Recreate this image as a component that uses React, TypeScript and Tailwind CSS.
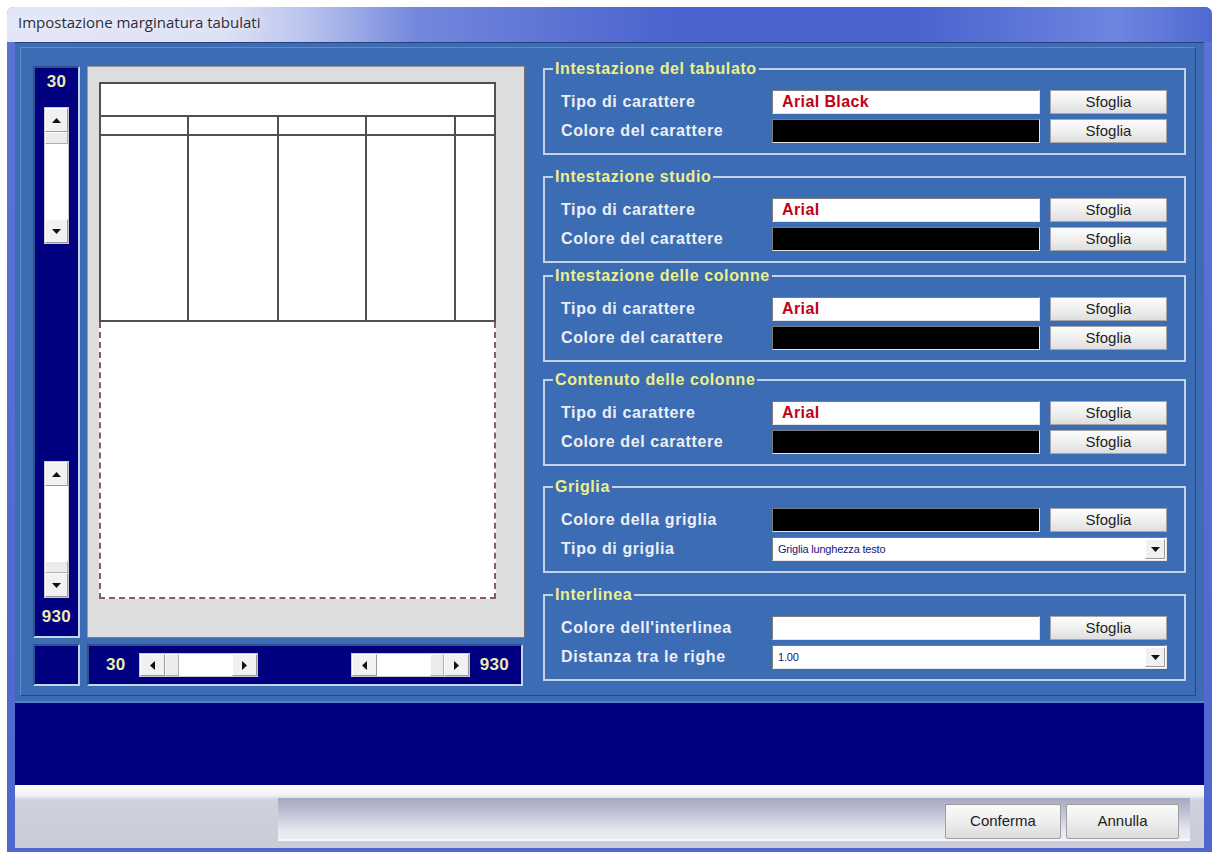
'use client';

import React from 'react';

type Dir = 'up' | 'down' | 'left' | 'right';

const arrowPaths: Record<Dir, string> = {
  up: 'M0 5L4.5 0L9 5Z',
  down: 'M0 0L9 0L4.5 5Z',
  left: 'M5 0L5 9L0 4.5Z',
  right: 'M0 0L5 4.5L0 9Z',
};

function Arrow({ dir }: { dir: Dir }) {
  const vertical = dir === 'up' || dir === 'down';
  return (
    <svg width={vertical ? 9 : 5} height={vertical ? 5 : 9} viewBox={vertical ? '0 0 9 5' : '0 0 5 9'}>
      <path d={arrowPaths[dir]} fill="#111" />
    </svg>
  );
}

// raised grey button used by scrollbars and combos
function ArrowButton({ dir, className = '' }: { dir: Dir; className?: string }) {
  return (
    <div
      className={`flex items-center justify-center bg-[#f1f1f1] border border-t-white border-l-white border-r-[#9a9a9a] border-b-[#9a9a9a] ${className}`}
    >
      <Arrow dir={dir} />
    </div>
  );
}

function VScroll({ thumbAtTop }: { thumbAtTop: boolean }) {
  const thumb = (
    <div className="h-[12px] bg-[#ebebeb] border border-t-white border-l-white border-r-[#b0b0b0] border-b-[#b0b0b0]" />
  );
  return (
    <div className="w-[25px] h-[137px] flex flex-col bg-white border border-[#c9c9c9]">
      <ArrowButton dir="up" className="h-[24px]" />
      {thumbAtTop && thumb}
      <div className="flex-1 bg-white" />
      {!thumbAtTop && thumb}
      <ArrowButton dir="down" className="h-[24px]" />
    </div>
  );
}

function HScroll({ thumbAtLeft }: { thumbAtLeft: boolean }) {
  const thumb = (
    <div className="w-[14px] bg-[#ebebeb] border border-t-white border-l-white border-r-[#b0b0b0] border-b-[#b0b0b0]" />
  );
  return (
    <div className="w-[119px] h-[24px] flex bg-white border border-[#c9c9c9]">
      <ArrowButton dir="left" className="w-[25px]" />
      {thumbAtLeft && thumb}
      <div className="flex-1 bg-white" />
      {!thumbAtLeft && thumb}
      <ArrowButton dir="right" className="w-[25px]" />
    </div>
  );
}

type Row =
  | { label: string; kind: 'font'; value: string }
  | { label: string; kind: 'color'; swatch: 'black' | 'white' }
  | { label: string; kind: 'combo'; value: string };

interface Group {
  title: string;
  spacing: string;
  rows: Row[];
}

const groups: Group[] = [
  {
    title: 'Intestazione del tabulato',
    spacing: 'mt-0',
    rows: [
      { label: 'Tipo di carattere', kind: 'font', value: 'Arial Black' },
      { label: 'Colore del carattere', kind: 'color', swatch: 'black' },
    ],
  },
  {
    title: 'Intestazione studio',
    spacing: 'mt-[13px]',
    rows: [
      { label: 'Tipo di carattere', kind: 'font', value: 'Arial' },
      { label: 'Colore del carattere', kind: 'color', swatch: 'black' },
    ],
  },
  {
    title: 'Intestazione delle colonne',
    spacing: 'mt-[4px]',
    rows: [
      { label: 'Tipo di carattere', kind: 'font', value: 'Arial' },
      { label: 'Colore del carattere', kind: 'color', swatch: 'black' },
    ],
  },
  {
    title: 'Contenuto delle colonne',
    spacing: 'mt-[9px]',
    rows: [
      { label: 'Tipo di carattere', kind: 'font', value: 'Arial' },
      { label: 'Colore del carattere', kind: 'color', swatch: 'black' },
    ],
  },
  {
    title: 'Griglia',
    spacing: 'mt-[12px]',
    rows: [
      { label: 'Colore della griglia', kind: 'color', swatch: 'black' },
      { label: 'Tipo di griglia', kind: 'combo', value: 'Griglia lunghezza testo' },
    ],
  },
  {
    title: 'Interlinea',
    spacing: 'mt-[13px]',
    rows: [
      { label: "Colore dell'interlinea", kind: 'color', swatch: 'white' },
      { label: 'Distanza tra le righe', kind: 'combo', value: '1.00' },
    ],
  },
];

const sunken = 'border border-t-[#7c7c7c] border-l-[#7c7c7c] border-r-[#e4e4e4] border-b-[#e4e4e4]';

function BrowseButton() {
  return (
    <div className="w-[117px] h-[24px] flex items-center justify-center bg-[linear-gradient(180deg,#fcfcfc_0%,#f0f0f0_50%,#dedede_100%)] border border-[#a6a6a6] text-[15px] text-[#1e1e1e]">
      Sfoglia
    </div>
  );
}

function FieldRow({ row }: { row: Row }) {
  return (
    <div className="flex items-center h-[24px]">
      <div className="w-[211px] text-[16px] font-bold text-[#eceff6] tracking-[0.6px]">{row.label}</div>
      {row.kind === 'font' && (
        <>
          <div className={`w-[268px] h-[24px] bg-white ${sunken} pl-[9px] flex items-center text-[16px] font-bold text-[#c00018] tracking-[0.4px]`}>
            {row.value}
          </div>
          <div className="ml-[10px]">
            <BrowseButton />
          </div>
        </>
      )}
      {row.kind === 'color' && (
        <>
          <div className={`w-[268px] h-[24px] ${sunken} ${row.swatch === 'black' ? 'bg-black' : 'bg-white'}`} />
          <div className="ml-[10px]">
            <BrowseButton />
          </div>
        </>
      )}
      {row.kind === 'combo' && (
        <div className={`w-[395px] h-[24px] bg-white ${sunken} flex items-center`}>
          <span className="pl-[5px] flex-1 text-[11px] text-[#16167a] tracking-[-0.2px]">{row.value}</span>
          <ArrowButton dir="down" className="w-[20px] h-[20px] mr-[1px]" />
        </div>
      )}
    </div>
  );
}

function GroupBox({ group }: { group: Group }) {
  return (
    <fieldset className={`w-[643px] border-2 border-[#c4d2ea] px-[8px] pt-[12px] pb-[10px] ${group.spacing}`}>
      <legend className="px-[2px] text-[16px] leading-[18px] font-bold text-[#eef08a] tracking-[0.6px]">
        {group.title}
      </legend>
      <div className="px-[8px] flex flex-col gap-[5px]">
        {group.rows.map((row) => (
          <FieldRow key={row.label} row={row} />
        ))}
      </div>
    </fieldset>
  );
}

// column widths of the sample table (each includes its right rule)
const tableCols = ['w-[88px] border-r-2', 'w-[90px] border-r-2', 'w-[88px] border-r-2', 'w-[89px] border-r-2', 'flex-1'];

function PagePreview() {
  return (
    <div className="w-[438px] h-[572px] bg-[#dddddd] border border-t-[#9a9a9a] border-l-[#9a9a9a] border-r-[#6f6f6f] border-b-[#7d7d7d]">
      <div className="ml-[11px] mt-[15px] w-[397px] h-[517px] bg-white flex flex-col">
        <div className="h-[240px] border-2 border-[#505050] flex flex-col">
          <div className="h-[33px] border-b-2 border-[#505050]" />
          <div className="flex-1 flex">
            {tableCols.map((c, i) => (
              <div key={i} className={`${c} border-[#505050] flex flex-col`}>
                <div className="h-[19px] border-b-2 border-[#505050]" />
                <div className="flex-1" />
              </div>
            ))}
          </div>
        </div>
        <div className="flex-1 border-2 border-t-0 border-dashed border-[#8a5c5c]" />
      </div>
    </div>
  );
}

const navyBox = 'bg-[#000080] border-2 border-t-[#2d528f] border-l-[#2d528f] border-r-[#c3d4ee] border-b-[#c3d4ee]';
const numberText = 'text-[17px] font-bold text-[#ecebb0] tracking-[0.3px]';

export default function App() {
  return (
    <div className="w-[1217px] h-[854px] bg-white overflow-hidden font-['Liberation_Sans',Arial,sans-serif]">
      <div className="ml-[7px] mt-[7px] w-[1205px] h-[845px] rounded-t-[7px] bg-[linear-gradient(180deg,#5a74d6_0%,#4d67cf_100%)] flex flex-col px-[8px] pb-[4px]">
        {/* title bar */}
        <div className="h-[36px] -mx-[8px] rounded-t-[7px] pl-[11px] pt-[4px] bg-[linear-gradient(90deg,#e3e6f6_0%,#dde1f5_18%,#b9c3ee_25%,#7387dc_34%,#4b64cf_55%,#4a62ce_75%,#6d86e0_92%,#5069d2_100%)]">
          <span className="font-['Open_Sans',sans-serif] text-[15px] text-[#2c2c3a] [text-shadow:0_0_8px_#ffffff]">
            Impostazione marginatura tabulati
          </span>
        </div>

        {/* client area */}
        <div className="flex-1 flex flex-col border-t border-[#27407e]">
          <div className="h-[658px] bg-[#3c6cb3] pt-[4px] pl-[5px] pr-[8px]">
            <div className="h-[649px] border border-t-[#5d8ccc] border-l-[#5d8ccc] border-r-[#234a88] border-b-[#234a88] flex items-start pl-[12px] pt-[12px]">
              {/* left: preview with margin controls */}
              <div className="w-[492px] mt-[6px] flex flex-col gap-[6px]">
                <div className="flex gap-[7px]">
                  <div className={`w-[47px] h-[572px] ${navyBox} flex flex-col items-center pt-[4px] pb-[9px]`}>
                    <div className={`${numberText} leading-[20px]`}>30</div>
                    <div className="mt-[15px]">
                      <VScroll thumbAtTop />
                    </div>
                    <div className="flex-1" />
                    <VScroll thumbAtTop={false} />
                    <div className={`${numberText} leading-[20px] mt-[9px]`}>930</div>
                  </div>
                  <PagePreview />
                </div>
                <div className="flex gap-[7px]">
                  <div className={`w-[47px] h-[42px] ${navyBox}`} />
                  <div className={`w-[436px] h-[42px] ${navyBox} flex items-center pl-[17px] pr-[12px]`}>
                    <span className={numberText}>30</span>
                    <div className="ml-[13px]">
                      <HScroll thumbAtLeft />
                    </div>
                    <div className="ml-auto">
                      <HScroll thumbAtLeft={false} />
                    </div>
                    <span className={`${numberText} ml-[10px]`}>930</span>
                  </div>
                </div>
              </div>

              {/* right: font and colour settings */}
              <div className="ml-[18px] flex flex-col">
                {groups.map((g) => (
                  <GroupBox key={g.title} group={g} />
                ))}
              </div>
            </div>
          </div>

          <div className="h-[84px] bg-[#000080] border-t-2 border-[#5a7fd0]" />

          {/* status strip with buttons */}
          <div className="flex-1 flex bg-[linear-gradient(180deg,#fdfdfe_0%,#f2f3f6_16%,#cfd1dd_24%,#c9cbd8_100%)]">
            <div className="w-[263px]" />
            <div className="flex-1 mt-[13px] mb-[7px] mr-[14px] border-b-2 border-[#f7f7fa] bg-[linear-gradient(180deg,#a6a9c1_0%,#bfc2d3_35%,#e7e8ef_80%,#eceef3_100%)] flex items-center justify-end gap-[5px] pr-[11px]">
              <div className="w-[116px] h-[35px] mt-[6px] flex items-center justify-center bg-[linear-gradient(180deg,#fafafa_0%,#eeeeee_50%,#dcdcdc_100%)] border border-[#9e9e9e] rounded-[2px] text-[15px] text-[#222]">
                Conferma
              </div>
              <div className="w-[113px] h-[35px] mt-[6px] flex items-center justify-center bg-[linear-gradient(180deg,#fafafa_0%,#eeeeee_50%,#dcdcdc_100%)] border border-[#9e9e9e] rounded-[2px] text-[15px] text-[#222]">
                Annulla
              </div>
            </div>
          </div>
        </div>
      </div>
    </div>
  );
}
